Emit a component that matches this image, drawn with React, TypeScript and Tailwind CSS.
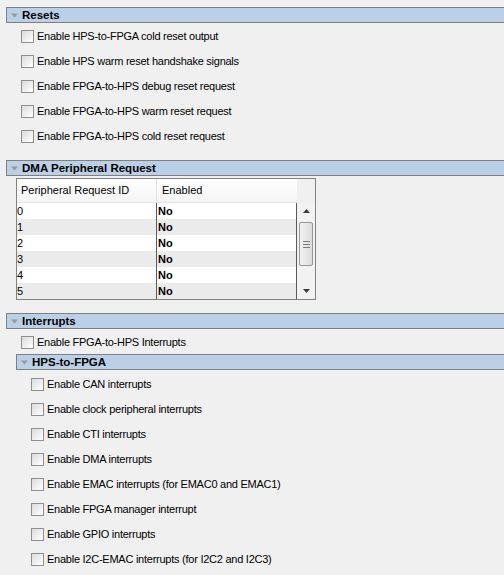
import React from "react";

function Triangle() {
  return (
    <svg width="7" height="5" viewBox="0 0 7 5" className="shrink-0">
      <path d="M0 0.5 L7 0.5 L3.5 4.5 Z" fill="#9a9a9a" />
    </svg>
  );
}

function SectionHeader({ title, indent }: { title: string; indent: string }) {
  return (
    <div className={`flex h-[16px] items-center border-y border-l border-[#808080] bg-[#b9d0e6] ${indent}`}>
      <div className="flex w-[15px] justify-center">
        <Triangle />
      </div>
      <span className="text-[11.5px] font-bold leading-[14px]">{title}</span>
    </div>
  );
}

function CheckRow({ label, className = "h-[25px]" }: { label: string; className?: string }) {
  return (
    <div className={`flex items-start pt-[6px] ${className}`}>
      <div className="h-[13px] w-[13px] shrink-0 border border-[#8e8f8f] bg-gradient-to-br from-[#dcdcdc] to-white" />
      <span className="ml-[3px] leading-[13px] tracking-[-0.25px]">{label}</span>
    </div>
  );
}

function Scrollbar() {
  return (
    <div className="flex w-[18px] flex-col items-center bg-[#f2f2f2]">
      <div className="flex h-[16px] w-full items-center justify-center">
        <svg width="7" height="4" viewBox="0 0 7 4">
          <path d="M0 4 L7 4 L3.5 0 Z" fill="#3c3c3c" />
        </svg>
      </div>
      <div className="mt-[3px] flex h-[44px] w-[14px] flex-col items-center justify-center gap-[2px] rounded-[2px] border border-[#979797] bg-gradient-to-r from-[#f3f3f3] to-[#dcdcdc]">
        <div className="h-px w-[7px] bg-[#7d7d7d]" />
        <div className="h-px w-[7px] bg-[#7d7d7d]" />
        <div className="h-px w-[7px] bg-[#7d7d7d]" />
      </div>
      <div className="flex-1" />
      <div className="flex h-[16px] w-full items-center justify-center">
        <svg width="7" height="4" viewBox="0 0 7 4">
          <path d="M0 0 L7 0 L3.5 4 Z" fill="#3c3c3c" />
        </svg>
      </div>
    </div>
  );
}

function DmaTable() {
  const rows = ["0", "1", "2", "3", "4", "5"];
  return (
    <div className="ml-[16px] mt-[2px] w-[300px] border border-[#828282] bg-[#f0f0f0]">
      <div className="flex h-[24px]">
        <div className="flex w-[140px] items-center border-r border-b border-[#e2e2e2] bg-gradient-to-b from-white to-[#f5f5f5] pl-[4px]">
          Peripheral Request ID
        </div>
        <div className="flex w-[140px] items-center border-b border-[#e2e2e2] bg-gradient-to-b from-white to-[#f5f5f5] pl-[5px]">
          Enabled
        </div>
      </div>
      <div className="flex">
        <div className="w-[280px] border-r border-[#5a5a5a]">
          {rows.map((r, i) => (
            <div key={r} className={`flex h-[16px] items-center ${i % 2 ? "bg-[#ebebeb]" : "bg-white"}`}>
              <div className="w-[140px] border-r border-[#5a5a5a] leading-[16px]">{r}</div>
              <div className="pl-[1px] font-bold leading-[16px]">No</div>
            </div>
          ))}
        </div>
        <Scrollbar />
      </div>
    </div>
  );
}

export default function App() {
  return (
    <div className="min-h-screen w-full bg-[#f0f0f0] pt-[7px] font-['Liberation_Sans',Arial,sans-serif] text-[11px] text-black">
      <SectionHeader title="Resets" indent="ml-[6px]" />
      <div className="mt-[1px] pl-[21px]">
        <CheckRow label="Enable HPS-to-FPGA cold reset output" />
        <CheckRow label="Enable HPS warm reset handshake signals" />
        <CheckRow label="Enable FPGA-to-HPS debug reset request" />
        <CheckRow label="Enable FPGA-to-HPS warm reset request" />
        <CheckRow label="Enable FPGA-to-HPS cold reset request" />
      </div>

      <div className="mt-[11px]">
        <SectionHeader title="DMA Peripheral Request" indent="ml-[6px]" />
      </div>
      <DmaTable />

      <div className="mt-[13px]">
        <SectionHeader title="Interrupts" indent="ml-[6px]" />
      </div>
      <div className="mt-[1px] pl-[21px]">
        <CheckRow label="Enable FPGA-to-HPS Interrupts" className="h-[24px]" />
      </div>
      <SectionHeader title="HPS-to-FPGA" indent="ml-[16px]" />
      <div className="mt-[2px] pl-[31px]">
        <CheckRow label="Enable CAN interrupts" />
        <CheckRow label="Enable clock peripheral interrupts" />
        <CheckRow label="Enable CTI interrupts" />
        <CheckRow label="Enable DMA interrupts" />
        <CheckRow label="Enable EMAC interrupts (for EMAC0 and EMAC1)" />
        <CheckRow label="Enable FPGA manager interrupt" />
        <CheckRow label="Enable GPIO interrupts" />
        <CheckRow label="Enable I2C-EMAC interrupts (for I2C2 and I2C3)" />
      </div>
    </div>
  );
}
